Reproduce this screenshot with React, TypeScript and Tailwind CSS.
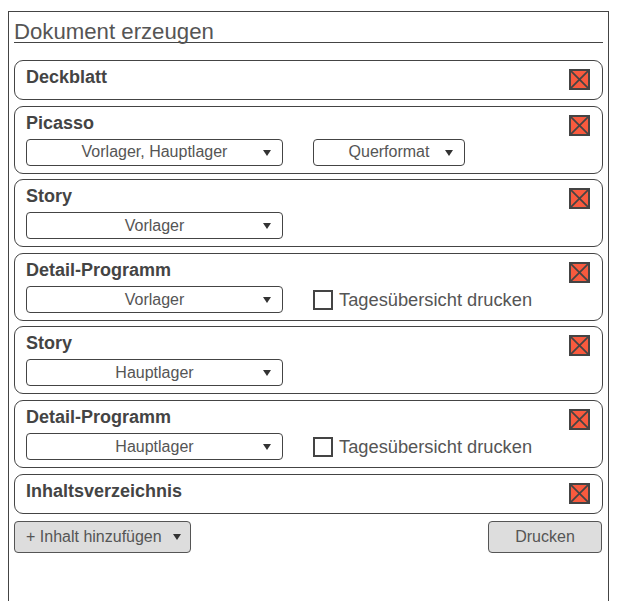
import React from "react";

const font = { fontFamily: '"Liberation Sans", Arial, sans-serif' };

function Arrow() {
  return (
    <svg width="8" height="6" viewBox="0 0 8 6" className="shrink-0">
      <polygon points="0,0 8,0 4,6" fill="#333" />
    </svg>
  );
}

function RedX() {
  return (
    <div className="w-[21px] h-[21px] shrink-0 mt-[8px] border-2 border-[#444] bg-[#f85a3e]">
      <svg width="17" height="17" viewBox="0 0 17 17" className="block">
        <line x1="0" y1="0" x2="17" y2="17" stroke="#444" strokeWidth="1.7" />
        <line x1="17" y1="0" x2="0" y2="17" stroke="#444" strokeWidth="1.7" />
      </svg>
    </div>
  );
}

function Select({ label, w }: { label: string; w: string }) {
  return (
    <div
      className={`relative h-[27px] ${w} border border-[#444] rounded-[4px] flex items-center justify-center text-[16px] text-[#555] bg-white`}
    >
      <span>{label}</span>
      <div className="absolute right-[11px] top-[10px]">
        <Arrow />
      </div>
    </div>
  );
}

function Check({ label }: { label: string }) {
  return (
    <div className="flex items-center gap-[6px]">
      <div className="w-[20px] h-[20px] border-2 border-[#444] bg-white" />
      <span className="text-[18.3px] text-[#555]">{label}</span>
    </div>
  );
}

function Card({ title, children }: { title: string; children?: React.ReactNode }) {
  return (
    <div
      className={`border border-[#444] rounded-[9px] pl-[11px] pr-[12px] flex justify-between items-start ${
        children ? "h-[68px]" : "h-[40px]"
      }`}
    >
      <div className="flex flex-col pt-[4px]">
        <div className="text-[18px] leading-[24px] font-bold text-[#444]">{title}</div>
        {children && <div className="flex items-center gap-[30px] mt-[4px]">{children}</div>}
      </div>
      <RedX />
    </div>
  );
}

export default function App() {
  return (
    <div className="w-[617px] h-[601px] bg-white overflow-hidden" style={font}>
      <div className="ml-[8px] mt-[11px] w-[601px] h-[600px] border-l border-t border-r border-[#444] px-[5px]">
        <div className="h-[31px] border-b border-[#444]">
          <div className="pt-[9px] text-[22.2px] leading-[22px] text-[#555]">Dokument erzeugen</div>
        </div>
        <div className="mt-[17px] flex flex-col gap-[5.6px]">
          <Card title="Deckblatt" />
          <Card title="Picasso">
            <Select label="Vorlager, Hauptlager" w="w-[257px]" />
            <Select label="Querformat" w="w-[152px]" />
          </Card>
          <Card title="Story">
            <Select label="Vorlager" w="w-[257px]" />
          </Card>
          <Card title="Detail-Programm">
            <Select label="Vorlager" w="w-[257px]" />
            <Check label="Tagesübersicht drucken" />
          </Card>
          <Card title="Story">
            <Select label="Hauptlager" w="w-[257px]" />
          </Card>
          <Card title="Detail-Programm">
            <Select label="Hauptlager" w="w-[257px]" />
            <Check label="Tagesübersicht drucken" />
          </Card>
          <Card title="Inhaltsverzeichnis" />
        </div>
        <div className="mt-[7px] flex justify-between">
          <div className="h-[32px] w-[177px] bg-[#ddd] border border-[#555] rounded-[4px] flex items-center pl-[11px] gap-[11px] text-[16px] text-[#555]">
            <span>+ Inhalt hinzufügen</span>
            <Arrow />
          </div>
          <div className="h-[32px] w-[114px] mr-[1px] bg-[#ddd] border border-[#555] rounded-[4px] flex items-center justify-center text-[16px] text-[#555]">
            Drucken
          </div>
        </div>
      </div>
    </div>
  );
}
